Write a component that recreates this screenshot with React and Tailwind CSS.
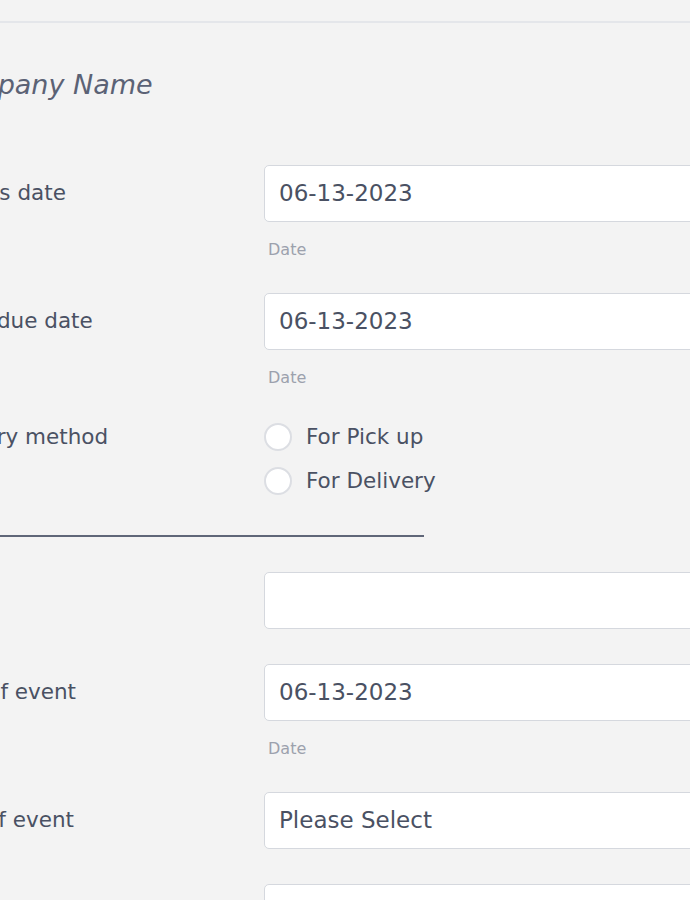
import React from 'react';

const font = { fontFamily: '"DejaVu Sans", Verdana, sans-serif' };

const Field = ({ label, value, hint }) => (
  <div className={`flex items-start ${hint ? 'mb-[33px]' : 'mb-[35px]'}`}>
    <div className="w-[335px] h-[57px] flex items-center shrink-0 text-[21.5px] text-[#4a5163]">{label}</div>
    <div className="flex flex-col">
      <div className="w-[500px] h-[57px] bg-white border border-[#d5d8de] rounded-[5px] flex items-center pl-[14px] text-[23px] text-[#4a5163]">
        {value}
      </div>
      {hint && <div className="mt-[18px] ml-[4px] h-[20px] leading-[20px] text-[16px] text-[#9ca1ad]">{hint}</div>}
    </div>
  </div>
);

const Radio = ({ label }) => (
  <label className="flex items-center gap-[14px]">
    <span className="w-[28px] h-[28px] rounded-full bg-white border-2 border-[#dcdee3]" />
    <span className="text-[21.5px] text-[#4a5163] leading-[28px]">{label}</span>
  </label>
);

export default function App() {
  return (
    <div className="w-[690px] h-[900px] overflow-hidden bg-[#f3f3f3]" style={font}>
      <div className="h-[23px] border-b-2 border-[#e4e6ea]" />
      <div className="-ml-[71px]">
        <h2 className="mt-[46px] mb-[64px] text-[27px] leading-[32px] italic text-[#5b6275] ml-[7px]">Company Name</h2>

        <Field label="Process date" value="06-13-2023" hint="Date" />
        <Field label="Order due date" value="06-13-2023" hint="Date" />

        <div className="flex items-start pt-[2px]">
          <div className="w-[335px] h-[28px] flex items-center shrink-0 text-[21.5px] text-[#4a5163]">Delivery method</div>
          <div className="flex flex-col gap-[16px]">
            <Radio label="For Pick up" />
            <Radio label="For Delivery" />
          </div>
        </div>

        <div className="mt-[40px] mb-[35px] w-[495px] h-[2px] bg-[#5f6678]" />

        <Field label="Venue" value="" />
        <Field label="Date of event" value="06-13-2023" hint="Date" />
        <Field label="Type of event" value="Please Select" />
        <Field label="Number of guests" value="" />
      </div>
    </div>
  );
}
